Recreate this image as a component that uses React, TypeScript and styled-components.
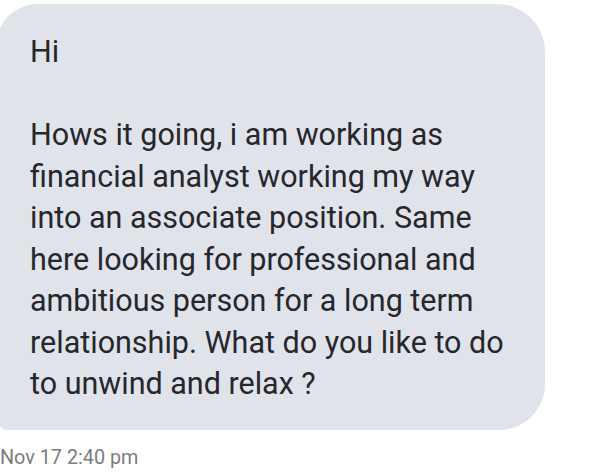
import React from "react";
import styled, { createGlobalStyle } from "styled-components";

const Global = createGlobalStyle`
  html, body { margin: 0; padding: 0; background: #ffffff; }
  body { width: 600px; height: 473px; overflow: hidden; }
`;

const Screen = styled.div`
  width: 600px;
  height: 473px;
  display: flex;
  flex-direction: column;
  align-items: flex-start;
  font-family: Roboto, "Noto Sans", Arial, sans-serif;
  overflow: hidden;
`;

const Bubble = styled.div`
  box-sizing: border-box;
  margin: 4px 0 0 -4px;
  width: 549px;
  height: 426px;
  padding: 27px 16px 0 34px;
  background: #e1e3ea;
  border-radius: 42px 48px 46px 12px;
  color: #26272c;
  font-size: 30.5px;
  line-height: 41.5px;
  white-space: pre-line;
`;

const Time = styled.div`
  margin: 16px 0 0 0;
  font-size: 19.8px;
  line-height: 24px;
  color: #7b7c80;
`;

const message =
  "Hi\n\nHows it going, i am working as\nfinancial analyst working my way\ninto an associate position. Same\nhere looking for professional and\nambitious person for a long term\nrelationship. What do you like to do\nto unwind and relax ?";

export default function App() {
  return (
    <>
      <Global />
      <Screen>
        <Bubble>{message}</Bubble>
        <Time>Nov 17 2:40 pm</Time>
      </Screen>
    </>
  );
}
